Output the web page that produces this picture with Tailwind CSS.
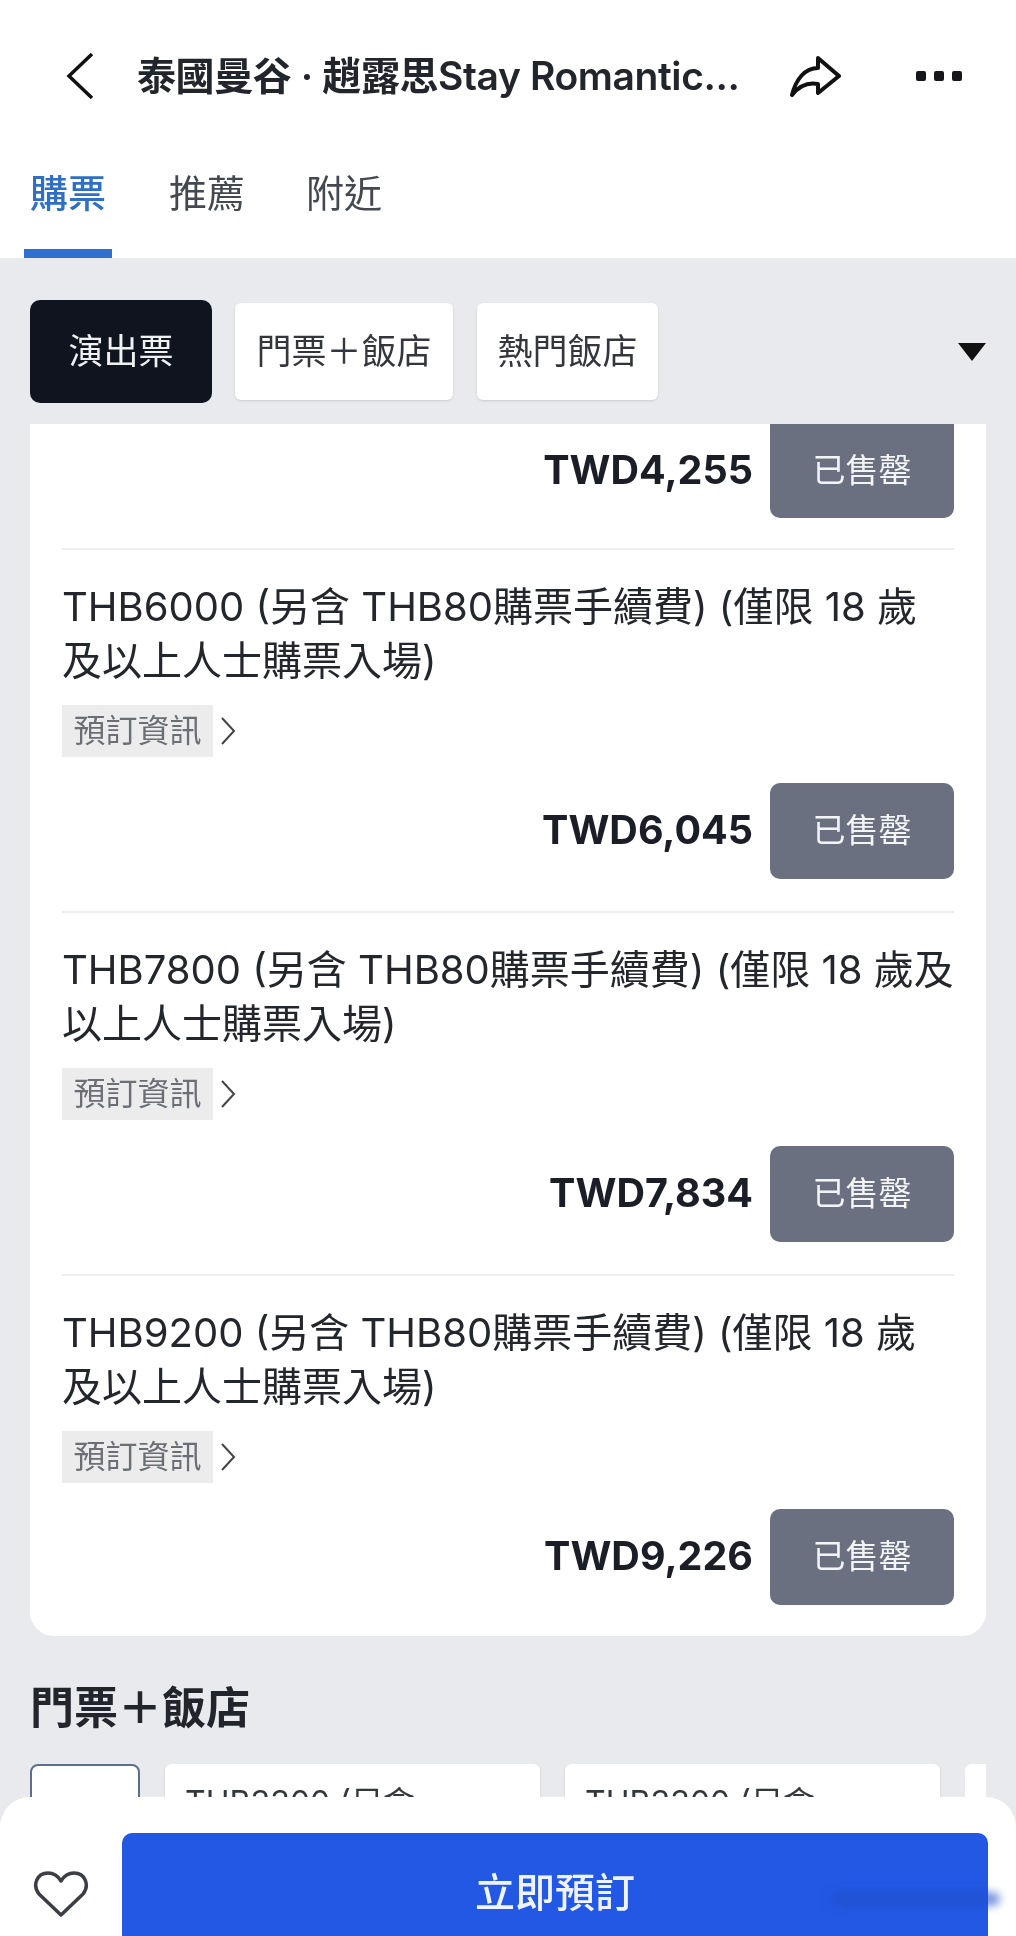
<!DOCTYPE html>
<html lang="zh-Hant">
<head>
<meta charset="utf-8">
<script src="https://cdn.jsdelivr.net/npm/@tailwindcss/browser@4"></script>
<title>購票</title>
</head>
<body class="m-0">
<div class="relative w-[1016px] h-[1936px] overflow-hidden bg-[#e9eaee] font-['Inter','Noto_Sans_CJK_TC',sans-serif] text-[#1b1e27] blur-[0.5px]">

  <header class="bg-white h-[258px] flex flex-col">
    <div class="h-[152px] flex items-center pl-[64px]">
      <svg class="w-[30px] h-[50px]" viewBox="0 0 30 50" fill="none" stroke="#111" stroke-width="3.5"><path d="M28 3 5 25l23 22"/></svg>
      <h1 class="ml-[43px] w-[610px] whitespace-nowrap text-[39px] font-semibold tracking-[-0.4px] text-[#23252c]">泰國曼谷 · 趙露思Stay Romantic...</h1>
      <svg class="ml-[43px] w-[52px] h-[42px]" viewBox="0 0 52 42" fill="none" stroke="#111" stroke-width="4" stroke-linejoin="round"><path d="M28 3 49 21 28 38V29C18 27 9 31 2 40 6 24 15 13 28 13Z"/></svg>
      <div class="ml-[74px] flex gap-[8px]"><span class="w-[10px] h-[10px] bg-[#15171d] rounded-[2px]"></span><span class="w-[10px] h-[10px] bg-[#15171d] rounded-[2px]"></span><span class="w-[10px] h-[10px] bg-[#15171d] rounded-[2px]"></span></div>
    </div>
    <nav class="flex-1 flex pl-[24px] text-[38px] leading-none">
      <div class="w-[88px] relative text-center text-[#2f6fc4] font-medium pt-[22px]">購票<span class="absolute left-0 right-0 bottom-0 h-[9px] bg-[#2f6fd0]"></span></div>
      <div class="ml-[57px] pt-[22px] text-[#444850]">推薦</div>
      <div class="ml-[61px] pt-[22px] text-[#444850]">附近</div>
    </nav>
  </header>

  <div class="px-[30px] pt-[42px] h-[166px]">
    <div class="flex items-center">
      <div class="w-[182px] h-[103px] rounded-[10px] bg-[#10141f] text-[#eef0f2] text-[35px] flex items-center justify-center">演出票</div>
      <div class="ml-[23px] w-[218px] h-[97px] rounded-[6px] bg-white text-[#33363d] text-[35px] flex items-center justify-center shadow-sm whitespace-nowrap">門票＋飯店</div>
      <div class="ml-[24px] w-[181px] h-[97px] rounded-[6px] bg-white text-[#33363d] text-[35px] flex items-center justify-center shadow-sm">熱門飯店</div>
      <svg class="ml-[300px] w-[28px] h-[18px]" viewBox="0 0 28 18" fill="#111"><path d="M0 0h28L14 18Z"/></svg>
    </div>
  </div>

  <main class="mx-[30px] h-[1212px] rounded-b-[24px] bg-white px-[32px]">
    <div class="h-[126px] border-b-2 border-[#eceef0] flex justify-end items-start">
      <div class="flex items-center">
        <span class="text-[39.5px] font-bold mr-[17px]">TWD4,255</span>
        <span class="w-[184px] h-[94px] rounded-b-[10px] bg-[#6a707f] text-[#f3f4f6] text-[33px] flex items-center justify-center">已售罄</span>
      </div>
    </div>

    <article class="h-[363px] border-b-2 border-[#eceef0] pt-[30px]">
      <p class="text-[40px] leading-[54px] whitespace-nowrap text-[#24262d]">THB6000 (另含 THB80購票手續費) (僅限 18 歲<br>及以上人士購票入場)</p>
      <div class="mt-[17px] flex items-center"><span class="w-[151px] h-[52px] bg-[#ececec] text-[#6b6e75] text-[32px] flex items-center justify-center">預訂資訊</span><svg class="ml-[7px] w-[16px] h-[30px]" viewBox="0 0 16 30" fill="none" stroke="#444" stroke-width="2"><path d="M2 2l12 13L2 28"/></svg></div>
      <div class="mt-[26px] flex justify-end items-center"><span class="text-[39.5px] font-bold mr-[17px]">TWD6,045</span><span class="w-[184px] h-[96px] rounded-[10px] bg-[#6a707f] text-[#f3f4f6] text-[33px] flex items-center justify-center">已售罄</span></div>
    </article>

    <article class="h-[363px] border-b-2 border-[#eceef0] pt-[30px]">
      <p class="text-[40px] leading-[54px] whitespace-nowrap text-[#24262d]">THB7800 (另含 THB80購票手續費) (僅限 18 歲及<br>以上人士購票入場)</p>
      <div class="mt-[17px] flex items-center"><span class="w-[151px] h-[52px] bg-[#ececec] text-[#6b6e75] text-[32px] flex items-center justify-center">預訂資訊</span><svg class="ml-[7px] w-[16px] h-[30px]" viewBox="0 0 16 30" fill="none" stroke="#444" stroke-width="2"><path d="M2 2l12 13L2 28"/></svg></div>
      <div class="mt-[26px] flex justify-end items-center"><span class="text-[39.5px] font-bold mr-[17px]">TWD7,834</span><span class="w-[184px] h-[96px] rounded-[10px] bg-[#6a707f] text-[#f3f4f6] text-[33px] flex items-center justify-center">已售罄</span></div>
    </article>

    <article class="h-[361px] pt-[30px]">
      <p class="text-[40px] leading-[54px] whitespace-nowrap text-[#24262d]">THB9200 (另含 THB80購票手續費) (僅限 18 歲<br>及以上人士購票入場)</p>
      <div class="mt-[17px] flex items-center"><span class="w-[151px] h-[52px] bg-[#ececec] text-[#6b6e75] text-[32px] flex items-center justify-center">預訂資訊</span><svg class="ml-[7px] w-[16px] h-[30px]" viewBox="0 0 16 30" fill="none" stroke="#444" stroke-width="2"><path d="M2 2l12 13L2 28"/></svg></div>
      <div class="mt-[26px] flex justify-end items-center"><span class="text-[39.5px] font-bold mr-[17px]">TWD9,226</span><span class="w-[184px] h-[96px] rounded-[10px] bg-[#6a707f] text-[#f3f4f6] text-[33px] flex items-center justify-center">已售罄</span></div>
    </article>
  </main>

  <section class="px-[30px] pt-[44px]">
    <h2 class="text-[44px] leading-[56px] font-bold text-[#23252c]">門票＋飯店</h2>
    <div class="mt-[28px] flex h-[120px] gap-[25px] overflow-hidden">
      <div class="w-[110px] shrink-0 rounded-t-[8px] border-2 border-[#5a6f8a] bg-white"></div>
      <div class="w-[375px] shrink-0 rounded-t-[6px] bg-white shadow-sm pl-[20px] pt-[15px] text-[32px] text-[#33363d] whitespace-nowrap">THB3300 (另含</div>
      <div class="w-[375px] shrink-0 rounded-t-[6px] bg-white shadow-sm pl-[20px] pt-[15px] text-[32px] text-[#33363d] whitespace-nowrap">THB3300 (另含</div>
      <div class="w-[22px] shrink-0 rounded-tl-[6px] bg-white"></div>
    </div>
  </section>

  <footer class="absolute left-0 right-0 bottom-0 h-[139px] rounded-t-[30px] bg-white flex pl-[33px] pr-[28px] pt-[36px]">
    <svg class="mt-[36px] w-[56px] h-[50px]" viewBox="0 0 56 50" fill="none" stroke="#3b3e45" stroke-width="3.5" stroke-linejoin="round"><path d="M28 46 6 25C-1 16 4 4 15 4c6 0 10 3 13 8 3-5 7-8 13-8 11 0 16 12 9 21Z"/></svg>
    <button class="ml-[33px] flex-1 h-[120px] rounded-t-[10px] bg-[#2258e4] text-[#eef3ff] text-[40px] font-medium">立即預訂</button>
    <span class="absolute right-[16px] bottom-[30px] w-[170px] h-[14px] rounded-full bg-[#1f4fc8]/60 blur-[4px]"></span>
  </footer>
</div>
</body>
</html>
